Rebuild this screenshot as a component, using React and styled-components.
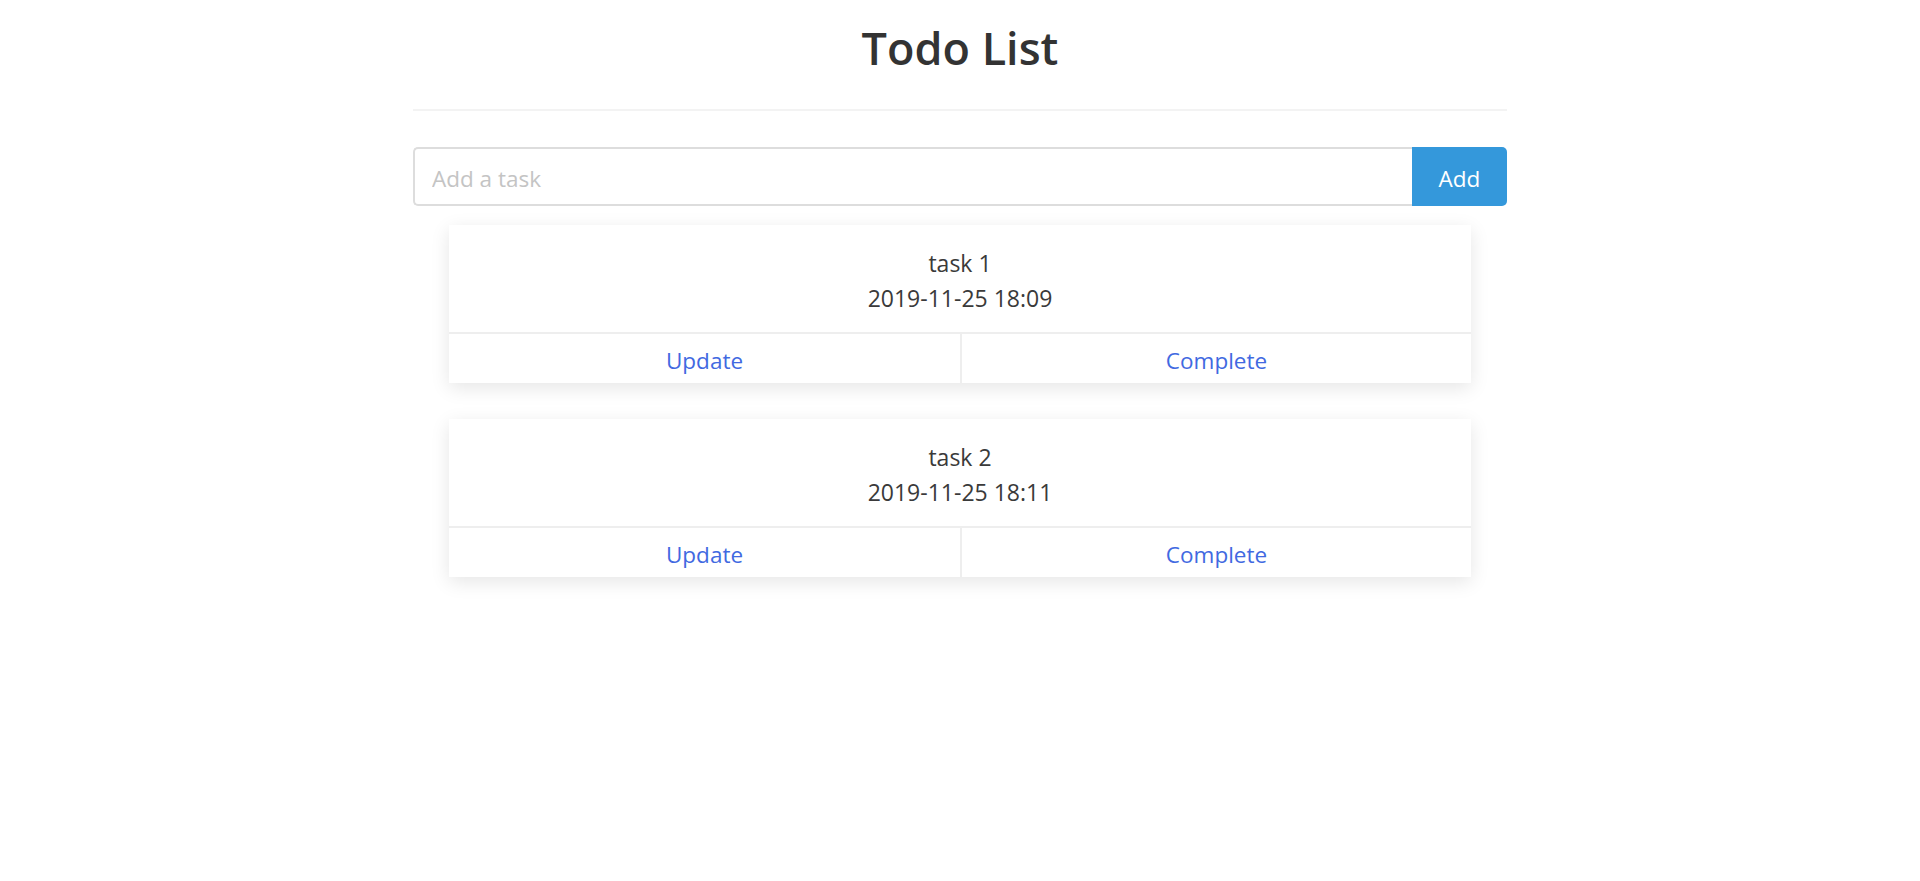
import React from "react";
import styled, { createGlobalStyle } from "styled-components";

const GlobalStyle = createGlobalStyle`
  html, body {
    margin: 0;
    padding: 0;
    background: #ffffff;
  }
  body {
    font-family: "Open Sans", "Noto Sans", "Liberation Sans", sans-serif;
    color: #333333;
  }
  * { box-sizing: border-box; }
`;

const Page = styled.div`
  width: 1094px;
  margin: 0 auto;
  padding-bottom: 40px;
`;

const Title = styled.h1`
  margin: 0;
  padding-top: 17px;
  text-align: center;
  font-size: 45px;
  font-weight: 600;
  line-height: 61px;
  color: #333333;
`;

const Divider = styled.div`
  height: 2px;
  margin-top: 31px;
  background: #f3f3f3;
`;

const Form = styled.form`
  display: flex;
  margin-top: 36px;
  height: 59px;
`;

const Input = styled.input`
  flex: 1;
  min-width: 0;
  height: 100%;
  border: 2px solid #dddddd;
  border-right: none;
  border-radius: 5px 0 0 5px;
  padding: 4px 17px 0;
  font-family: inherit;
  font-size: 22.5px;
  color: #333333;
  outline: none;
  &::placeholder {
    color: #c4c4c4;
  }
`;

const AddButton = styled.button`
  width: 95px;
  height: 100%;
  border: none;
  border-radius: 0 5px 5px 0;
  background: #3498db;
  color: #ffffff;
  font-family: inherit;
  font-size: 22.5px;
  padding: 4px 0 0;
  cursor: pointer;
`;

const List = styled.div`
  display: flex;
  flex-direction: column;
  gap: 36px;
  padding: 19px 36px 0;
`;

const Card = styled.div`
  background: #ffffff;
  box-shadow: 0 5px 18px rgba(0, 0, 0, 0.1);
`;

const CardBody = styled.div`
  padding: 21px 0 16px;
  text-align: center;
  font-size: 23px;
  line-height: 35px;
  color: #3a3a3a;
`;

const Actions = styled.div`
  display: grid;
  grid-template-columns: 1fr 1fr;
  border-top: 2px solid #eeeeee;
  height: 51px;
`;

const ActionButton = styled.button`
  border: none;
  border-left: ${(p) => (p.$divided ? "2px solid #eeeeee" : "none")};
  background: transparent;
  color: #4169e1;
  font-family: inherit;
  font-size: 22.5px;
  padding: 3px 0 0;
  cursor: pointer;
`;

const todos = [
  { id: 1, title: "task 1", time: "2019-11-25 18:09" },
  { id: 2, title: "task 2", time: "2019-11-25 18:11" },
];

export default function App() {
  return (
    <>
      <GlobalStyle />
      <Page>
        <Title>Todo List</Title>
        <Divider />
        <Form onSubmit={(e) => e.preventDefault()}>
          <Input placeholder="Add a task" />
          <AddButton type="submit">Add</AddButton>
        </Form>
        <List>
          {todos.map((t) => (
            <Card key={t.id}>
              <CardBody>
                <div>{t.title}</div>
                <div>{t.time}</div>
              </CardBody>
              <Actions>
                <ActionButton>Update</ActionButton>
                <ActionButton $divided>Complete</ActionButton>
              </Actions>
            </Card>
          ))}
        </List>
      </Page>
    </>
  );
}
